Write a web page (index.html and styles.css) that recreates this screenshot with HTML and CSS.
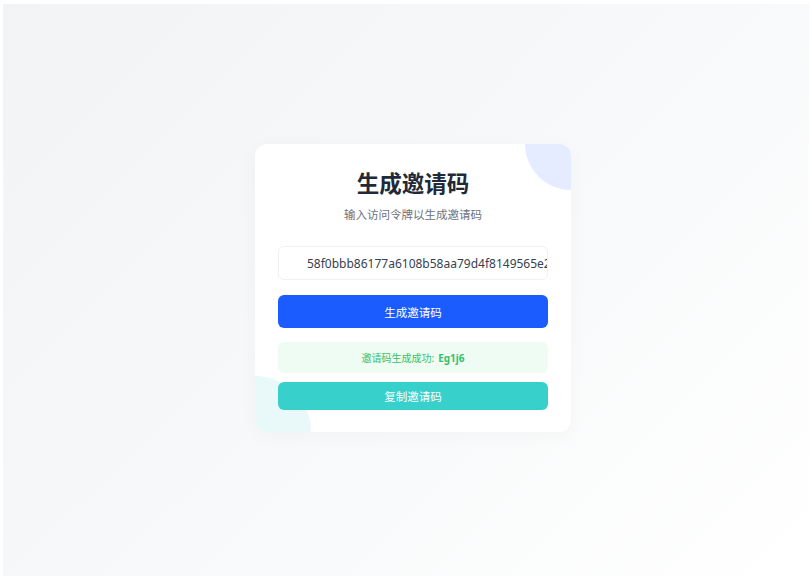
FILE: index.html
```html
<!DOCTYPE html>
<html lang="zh-CN">
<head>
  <meta charset="UTF-8" />
  <meta name="viewport" content="width=device-width, initial-scale=1.0" />
  <title>生成邀请码</title>
  <link rel="stylesheet" href="styles.css">
</head>
<body>
  <div class="page">
    <div class="card">
      <span class="blob blob-top"></span>
      <span class="blob blob-bottom"></span>

      <h1 class="title">生成邀请码</h1>
      <p class="subtitle">输入访问令牌以生成邀请码</p>

      <input class="token-input" type="text" value="58f0bbb86177a6108b58aa79d4f8149565e2c0a1" />
      <button class="btn btn-primary">生成邀请码</button>

      <div class="result">邀请码生成成功: <strong>Eg1j6</strong></div>
      <button class="btn btn-copy">复制邀请码</button>
    </div>
  </div>
</body>
</html>
```

FILE: styles.css
```css
* {
  box-sizing: border-box;
}

body {
  margin: 0;
  background: #fff;
  font-family: "Noto Sans", "Noto Sans CJK SC", sans-serif;
}

.page {
  margin: 4px 3px 10px 3px;
  height: 572px;
  padding-left: 14px;
  display: flex;
  align-items: center;
  justify-content: center;
  background: linear-gradient(135deg, #f2f3f5 0%, #f8f9fa 55%, #ffffff 100%);
}

.card {
  position: relative;
  overflow: hidden;
  width: 316px;
  margin-bottom: 4px;
  padding: 25px 23px 22px;
  background: #fff;
  border-radius: 12px;
  box-shadow: 0 4px 20px rgba(0, 0, 0, 0.03);
  display: flex;
  flex-direction: column;
}

.blob {
  position: absolute;
  border-radius: 50%;
}

.blob-top {
  width: 92px;
  height: 92px;
  top: -46px;
  right: -46px;
  background: #e6ecff;
}

.blob-bottom {
  width: 112px;
  height: 112px;
  bottom: -56px;
  left: -56px;
  background: #e9f8f8;
}

.title {
  position: relative;
  margin: 0;
  font-size: 22.5px;
  line-height: 30px;
  font-weight: 700;
  text-align: center;
  color: #1f2937;
}

.subtitle {
  position: relative;
  margin: 7px 0 0;
  font-size: 11.5px;
  line-height: 18px;
  text-align: center;
  color: #6b7280;
}

.token-input {
  position: relative;
  margin-top: 22px;
  width: 100%;
  height: 34px;
  padding: 0 0 0 28px;
  border: 1px solid #eef0f3;
  border-radius: 6px;
  font-family: "Noto Sans", "Noto Sans CJK SC", sans-serif;
  font-size: 12px;
  color: #374151;
  background: #fff;
  outline: none;
}

.btn {
  position: relative;
  width: 100%;
  border: none;
  border-radius: 6px;
  color: #fff;
  font-family: "Noto Sans", "Noto Sans CJK SC", sans-serif;
  font-size: 11.5px;
  cursor: pointer;
}

.btn-primary {
  margin-top: 15px;
  height: 33px;
  background: #1a5cff;
}

.result {
  position: relative;
  margin-top: 14px;
  height: 31px;
  display: flex;
  align-items: center;
  justify-content: center;
  background: #effcf3;
  border-radius: 6px;
  font-size: 10px;
  color: #34c06c;
}

.result strong {
  margin-left: 4px;
  font-weight: 700;
}

.btn-copy {
  margin-top: 9px;
  height: 28px;
  background: #38d0cb;
}
```
